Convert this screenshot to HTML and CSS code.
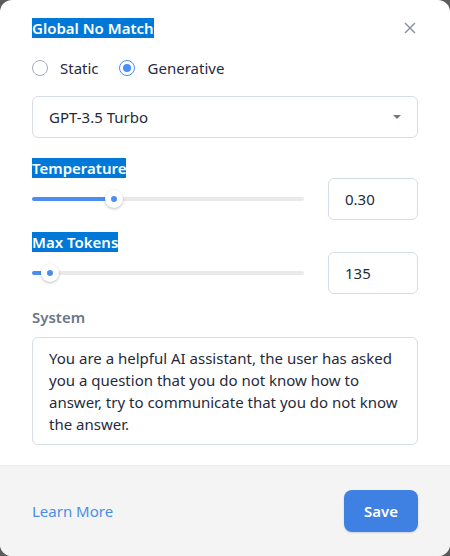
FILE: index.html
```html
<!DOCTYPE html>
<html lang="en">
<head>
    <meta charset="UTF-8">
    <meta name="viewport" content="width=device-width, initial-scale=1.0">
    <title>Global No Match</title>
    <link rel="stylesheet" href="styles.css">
</head>
<body>
    <div class="modal">
        <div class="modal-body">
            <div class="header">
                <span class="title"><span class="picked">Global No Match</span></span>
                <svg class="close" width="12" height="12" viewBox="0 0 12 12">
                    <path d="M1 1L11 11M11 1L1 11" stroke="#8a94a3" stroke-width="1.5" fill="none"/>
                </svg>
            </div>

            <div class="radios">
                <label class="radio"><span class="dot"></span>Static</label>
                <label class="radio checked"><span class="dot"></span>Generative</label>
            </div>

            <div class="select">
                <span>GPT-3.5 Turbo</span>
                <span class="caret"></span>
            </div>

            <div class="field-label"><span class="picked">Temperature</span></div>
            <div class="slider-row">
                <div class="slider">
                    <div class="track"></div>
                    <div class="fill" style="width: 30%"></div>
                    <div class="thumb" style="left: 30%"></div>
                </div>
                <div class="num">0.30</div>
            </div>

            <div class="field-label second"><span class="picked">Max Tokens</span></div>
            <div class="slider-row">
                <div class="slider">
                    <div class="track"></div>
                    <div class="fill" style="width: 6.6%"></div>
                    <div class="thumb" style="left: 6.6%"></div>
                </div>
                <div class="num">135</div>
            </div>

            <div class="system-label">System</div>
            <div class="textarea">You are a helpful AI assistant, the user has asked you a question that you do not know how to answer, try to communicate that you do not know the answer.</div>
        </div>

        <div class="footer">
            <a class="learn" href="#">Learn More</a>
            <button class="save">Save</button>
        </div>
    </div>
</body>
</html>
```

FILE: styles.css
```css
body {
    margin: 0;
    background: #5b5b5b;
    font-family: "Noto Sans", "Open Sans", sans-serif;
    color: #1f2b3d;
}
.modal {
    height: 556px;
    background: white;
    border-radius: 12px;
    overflow: hidden;
    display: flex;
    flex-direction: column;
}
.modal-body {
    flex: 1;
    padding: 18px 32px 20px;
}
.header {
    display: flex;
    justify-content: space-between;
    align-items: center;
    height: 20px;
}
.close {
    margin-right: 2px;
}
.title {
    font-size: 15px;
    font-weight: 600;
    line-height: 20px;
}
.picked {
    background: #0078d7;
    color: white;
}
.radios {
    display: flex;
    align-items: center;
    margin-top: 20px;
    height: 20px;
    font-size: 15px;
}
.radio {
    display: flex;
    align-items: center;
    margin-right: 20px;
}
.dot {
    width: 14px;
    height: 14px;
    border: 1px solid #a3acba;
    border-radius: 50%;
    margin-right: 12px;
    display: flex;
    align-items: center;
    justify-content: center;
}
.checked .dot {
    border-color: #4a8ff0;
    margin-right: 13px;
}
.checked .dot::after {
    content: "";
    width: 8px;
    height: 8px;
    border-radius: 50%;
    background: #4a8ff0;
}
.select {
    margin-top: 18px;
    height: 40px;
    border: 1px solid #d6dde6;
    border-radius: 6px;
    padding: 0 16px;
    display: flex;
    align-items: center;
    justify-content: space-between;
    font-size: 15px;
}
.caret {
    width: 0;
    height: 0;
    border-left: 4px solid transparent;
    border-right: 4px solid transparent;
    border-top: 4px solid #6e7888;
    margin-right: 0;
}
.field-label {
    margin-top: 20px;
    font-size: 15px;
    font-weight: 600;
    line-height: 20px;
}
.field-label.second {
    margin-top: 12px;
}
.slider-row {
    display: flex;
    align-items: center;
    gap: 24px;
}
.slider {
    position: relative;
    flex: 1;
    height: 4px;
}
.track {
    height: 4px;
    border-radius: 2px;
    background: #e9e9e9;
}
.fill {
    position: absolute;
    left: 0;
    top: 0;
    height: 4px;
    border-radius: 2px;
    background: #4a8ff0;
}
.thumb {
    position: absolute;
    top: -7px;
    width: 18px;
    height: 18px;
    margin-left: -9px;
    border-radius: 50%;
    background: white;
    box-shadow: 0 1px 3px rgba(0,0,0,0.25);
    display: flex;
    align-items: center;
    justify-content: center;
}
.thumb::after {
    content: "";
    width: 6px;
    height: 6px;
    border-radius: 50%;
    background: #4a8ff0;
}
.num {
    width: 72px;
    height: 40px;
    border: 1px solid #d6dde6;
    border-radius: 6px;
    padding: 0 0 0 16px;
    display: flex;
    align-items: center;
    font-size: 15px;
}
.system-label {
    margin-top: 13px;
    font-size: 15px;
    font-weight: 600;
    line-height: 20px;
    color: #6b7789;
}
.textarea {
    margin-top: 10px;
    border: 1px solid #d6dde6;
    border-radius: 6px;
    padding: 9px 16px;
    font-size: 15px;
    line-height: 22px;
}
.footer {
    background: #f4f4f4;
    border-top: 1px solid #ececec;
    padding: 24px 32px;
    display: flex;
    justify-content: space-between;
    align-items: center;
}
.learn {
    color: #4a8fe6;
    font-size: 15px;
    text-decoration: none;
}
.save {
    width: 74px;
    height: 42px;
    background: #3f80e3;
    color: white;
    border: none;
    border-radius: 8px;
    font-family: inherit;
    font-size: 15px;
    font-weight: 600;
    box-shadow: 0 1px 2px rgba(0,0,0,0.15);
}
```
